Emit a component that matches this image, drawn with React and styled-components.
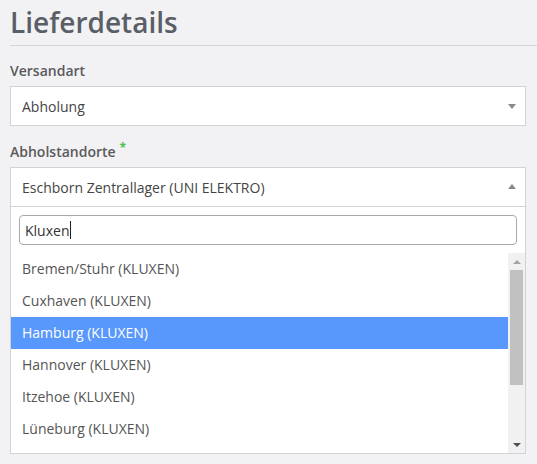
import React from "react";
import styled, { createGlobalStyle } from "styled-components";

const Global = createGlobalStyle`
  html, body { margin: 0; padding: 0; background: #f2f2f4; }
  body { font-family: "Open Sans", "Noto Sans", sans-serif; -webkit-font-smoothing: antialiased; }
  * { box-sizing: border-box; }
`;

const Page = styled.div`
  width: 537px;
  height: 464px;
  overflow: hidden;
  padding: 2px 11px 0 10px;
  background: #f2f2f4;
`;

const Title = styled.h2`
  margin: 0;
  font-size: 28px;
  font-weight: 600;
  line-height: 40px;
  height: 40px;
  color: #5a5e66;
`;

const Rule = styled.div`
  height: 1px;
  background: #d6d6da;
  margin: 3px -11px 15px 0;
`;

const Field = styled.div`
  display: flex;
  flex-direction: column;
  gap: 5px;
  margin-bottom: ${(p) => p.$mb || 0}px;
`;

const Label = styled.label`
  font-size: 14px;
  font-weight: 600;
  line-height: 20px;
  color: #5a5a5c;
  display: flex;
  gap: 4px;
`;

const Required = styled.span`
  color: #4cc04a;
  font-weight: 700;
  font-size: 12px;
  line-height: 12px;
`;

const SelectBox = styled.div`
  height: 40px;
  background: #fff;
  border: 1px solid #d3d3d7;
  display: flex;
  align-items: center;
  justify-content: space-between;
  padding: 0 9px 0 11px;
  font-size: 14px;
  color: #444;
`;

const Arrow = styled.span`
  width: 0;
  height: 0;
  border-left: 4px solid transparent;
  border-right: 4px solid transparent;
  ${(p) =>
    p.$up
      ? "border-bottom: 5px solid #888;"
      : "border-top: 5px solid #888;"}
  margin-top: ${(p) => (p.$up ? -1 : 1)}px;
`;

const Panel = styled.div`
  background: #fff;
  border: 1px solid #d3d3d7;
  border-top: none;
  height: 247px;
  display: flex;
  flex-direction: column;
`;

const SearchWrap = styled.div`
  padding: 8px;
`;

const SearchField = styled.div`
  height: 30px;
  border: 1px solid #aaa;
  border-radius: 4px;
  display: flex;
  align-items: center;
  padding: 0 5px;
  font-size: 14px;
  color: #333;
`;

const Caret = styled.span`
  width: 1px;
  height: 18px;
  background: #222;
  margin-left: 1px;
`;

const ListRow = styled.div`
  display: flex;
  height: 200px;
  overflow: hidden;
`;

const Options = styled.ul`
  list-style: none;
  margin: 0;
  padding: 0;
  flex: 1;
  overflow: hidden;
`;

const Option = styled.li`
  height: 32px;
  line-height: 32px;
  padding: 0 11px;
  font-size: 14px;
  color: ${(p) => (p.$active ? "#fff" : "#555")};
  background: ${(p) => (p.$active ? "#5897fb" : "transparent")};
  white-space: nowrap;
`;

const Scrollbar = styled.div`
  width: 17px;
  background: #f1f1f1;
  display: flex;
  flex-direction: column;
  align-items: center;
`;

const ScrollBtn = styled.div`
  height: 17px;
  width: 17px;
  display: flex;
  align-items: center;
  justify-content: center;
`;

const Tri = styled.span`
  width: 0;
  height: 0;
  border-left: 4px solid transparent;
  border-right: 4px solid transparent;
  ${(p) =>
    p.$up
      ? "border-bottom: 4px solid #a3a3a3;"
      : "border-top: 4px solid #505050;"}
`;

const Track = styled.div`
  flex: 1;
  width: 100%;
  padding: 0 2px;
`;

const Thumb = styled.div`
  height: 115px;
  background: #c1c1c1;
`;

const options = [
  "Bremen/Stuhr (KLUXEN)",
  "Cuxhaven (KLUXEN)",
  "Hamburg (KLUXEN)",
  "Hannover (KLUXEN)",
  "Itzehoe (KLUXEN)",
  "Lüneburg (KLUXEN)",
];

export default function App() {
  return (
    <Page>
      <Global />
      <Title>Lieferdetails</Title>
      <Rule />
      <Field $mb={16}>
        <Label>Versandart</Label>
        <SelectBox>
          <span>Abholung</span>
          <Arrow />
        </SelectBox>
      </Field>
      <Field>
        <Label>
          Abholstandorte <Required>*</Required>
        </Label>
        <div>
          <SelectBox>
            <span>Eschborn Zentrallager (UNI ELEKTRO)</span>
            <Arrow $up />
          </SelectBox>
          <Panel>
            <SearchWrap>
              <SearchField>
                Kluxen
                <Caret />
              </SearchField>
            </SearchWrap>
            <ListRow>
              <Options>
                {options.map((o) => (
                  <Option key={o} $active={o.startsWith("Hamburg")}>
                    {o}
                  </Option>
                ))}
              </Options>
              <Scrollbar>
                <ScrollBtn>
                  <Tri $up />
                </ScrollBtn>
                <Track>
                  <Thumb />
                </Track>
                <ScrollBtn>
                  <Tri />
                </ScrollBtn>
              </Scrollbar>
            </ListRow>
          </Panel>
        </div>
      </Field>
    </Page>
  );
}
